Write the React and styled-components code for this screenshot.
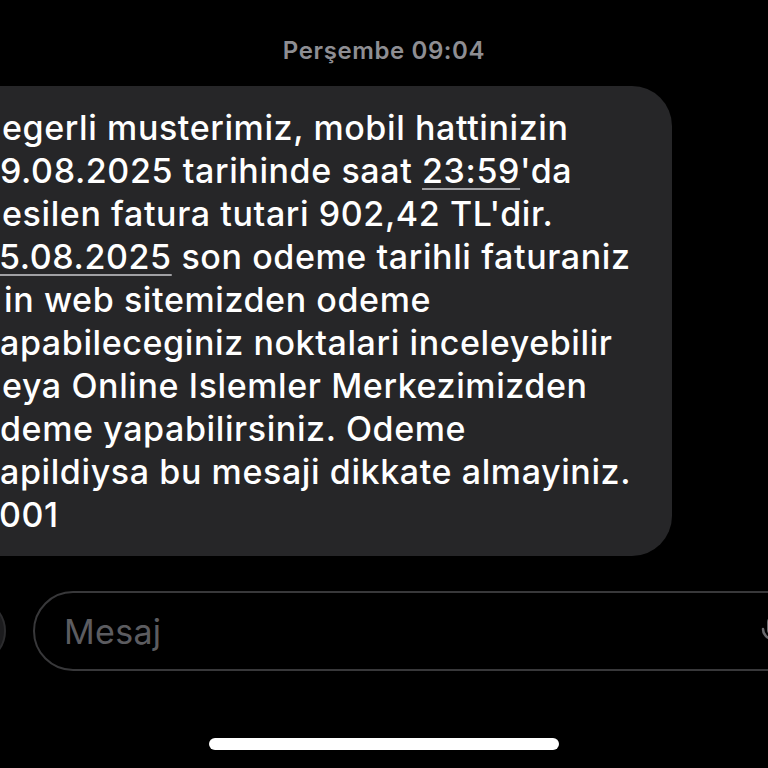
import styled, { createGlobalStyle } from "styled-components";

const Global = createGlobalStyle`
  html, body {
    margin: 0;
    padding: 0;
    background: #000;
  }
  body {
    font-family: Inter, "Noto Sans", "Liberation Sans", sans-serif;
    -webkit-font-smoothing: antialiased;
  }
`;

// Écran principal
const Screen = styled.div`
  width: 768px;
  height: 768px;
  background: #000;
  overflow: hidden;
  display: flex;
  flex-direction: column;
`;

const DateLabel = styled.div`
  height: 86px;
  box-sizing: border-box;
  padding-top: 36px;
  text-align: center;
  color: #8e8e93;
  font-size: 24px;
  font-weight: 600;
  letter-spacing: 0.6px;
`;

// Bulle du message
const Bubble = styled.div`
  margin-left: -40px;
  width: 712px;
  box-sizing: border-box;
  background: #262628;
  border-radius: 40px;
  padding: 20px 0 20px 42px;
  color: #fff;
  font-size: 34px;
  line-height: 43px;
  font-weight: 500;
  letter-spacing: 0.6px;
`;

const Line = styled.div`
  white-space: nowrap;
  margin-left: ${({ $shift }) => $shift || 0}px;
`;

const Link = styled.span`
  text-decoration: underline;
  text-decoration-color: #a0a0a4;
  text-decoration-thickness: 2px;
  text-underline-offset: 5px;
`;

// Barre de saisie
const InputRow = styled.div`
  margin-top: 35px;
  display: flex;
  align-items: center;
  gap: 27px;
`;

const PlusButton = styled.div`
  flex: none;
  width: 66px;
  height: 66px;
  margin-left: -60px;
  border-radius: 50%;
  background: #1c1c1e;
  border: 2px solid #2c2c2e;
  box-sizing: border-box;
`;

const Field = styled.div`
  flex: none;
  width: 780px;
  height: 80px;
  box-sizing: border-box;
  border: 2px solid #38383a;
  border-radius: 40px;
  display: flex;
  align-items: center;
  padding-left: 29px;
`;

const Placeholder = styled.span`
  flex: 1;
  color: #5c5c60;
  font-size: 34px;
  font-weight: 400;
  letter-spacing: 0.3px;
`;

const MicSlot = styled.div`
  flex: none;
  width: 50px;
  display: flex;
  align-items: center;
`;

const HomeArea = styled.div`
  flex: 1;
  display: flex;
  justify-content: center;
  align-items: flex-end;
  padding-bottom: 18px;
`;

const HomeIndicator = styled.div`
  width: 350px;
  height: 12px;
  border-radius: 6px;
  background: #fff;
`;

export default function App() {
  return (
    <Screen>
      <Global />
      <DateLabel>Perşembe 09:04</DateLabel>
      <Bubble>
        <Line $shift={0}>egerli musterimiz, mobil hattinizin</Line>
        <Line $shift={-2}>9.08.2025 tarihinde saat <Link>23:59</Link>'da</Line>
        <Line $shift={0}>esilen fatura tutari 902,42 TL'dir.</Line>
        <Line $shift={-3}><Link>5.08.2025</Link> son odeme tarihli faturaniz</Line>
        <Line $shift={2}>in web sitemizden odeme</Line>
        <Line $shift={-2}>apabileceginiz noktalari inceleyebilir</Line>
        <Line $shift={0}>eya Online Islemler Merkezimizden</Line>
        <Line $shift={-2}>deme yapabilirsiniz. Odeme</Line>
        <Line $shift={-2}>apildiysa bu mesaji dikkate almayiniz.</Line>
        <Line $shift={-3}>001</Line>
      </Bubble>
      <InputRow>
        <PlusButton />
        <Field>
          <Placeholder>Mesaj</Placeholder>
          <MicSlot>
            <svg width="24" height="34" viewBox="0 0 24 34" fill="none">
              <rect x="6" y="2" width="12" height="20" rx="6" fill="#6a6a6e" />
              <path d="M2 15a10 10 0 0 0 20 0M12 25v7" stroke="#6a6a6e" strokeWidth="2.5" strokeLinecap="round" />
            </svg>
          </MicSlot>
        </Field>
      </InputRow>
      <HomeArea>
        <HomeIndicator />
      </HomeArea>
    </Screen>
  );
}
